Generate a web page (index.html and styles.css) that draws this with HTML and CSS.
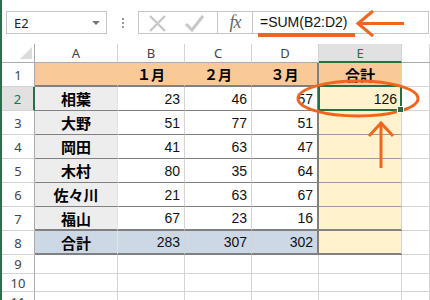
FILE: index.html
```html
<!DOCTYPE html>
<html lang="ja">
<head>
<meta charset="utf-8">
<link rel="stylesheet" href="styles.css">
</head>
<body>
<div class="win">
  <div class="bar">
    <div class="namebox"><span class="nb-text">E2</span><span class="nb-arrow"></span></div>
    <div class="dots"><i></i><i></i><i></i></div>
    <div class="btns">
      <div class="btn-xc">
        <svg width="78" height="23" viewBox="0 0 78 23">
          <path d="M11 5 L26 20 M26 5 L11 20" stroke="#c8c8c8" stroke-width="2.4" fill="none"/>
          <path d="M47 13 L53 19 L64 5" stroke="#c8c8c8" stroke-width="3" fill="none"/>
        </svg>
      </div>
      <div class="btn-fx">fx</div>
    </div>
    <div class="formula">=SUM(B2:D2)</div>
  </div>
  <div class="sheet">
    <div class="c corner"><span class="tri"></span></div>
    <div class="c ch">A</div>
    <div class="c ch">B</div>
    <div class="c ch">C</div>
    <div class="c ch">D</div>
    <div class="c ch sel">E</div>
    <div class="c ch"></div>

    <div class="c rh">1</div>
    <div class="c t1"></div>
    <div class="c t1">１月</div>
    <div class="c t1">２月</div>
    <div class="c t1 dR">３月</div>
    <div class="c t1 te">合計</div>
    <div class="c"></div>

    <div class="c rh sel">2</div>
    <div class="c nm">相葉</div>
    <div class="c n">23</div>
    <div class="c n">46</div>
    <div class="c n dR">57</div>
    <div class="c n e active">126</div>
    <div class="c"></div>

    <div class="c rh">3</div>
    <div class="c nm">大野</div>
    <div class="c n">51</div>
    <div class="c n">77</div>
    <div class="c n dR">51</div>
    <div class="c n e"></div>
    <div class="c"></div>

    <div class="c rh">4</div>
    <div class="c nm">岡田</div>
    <div class="c n">41</div>
    <div class="c n">63</div>
    <div class="c n dR">47</div>
    <div class="c n e"></div>
    <div class="c"></div>

    <div class="c rh">5</div>
    <div class="c nm">木村</div>
    <div class="c n">80</div>
    <div class="c n">35</div>
    <div class="c n dR">64</div>
    <div class="c n e"></div>
    <div class="c"></div>

    <div class="c rh">6</div>
    <div class="c nm">佐々川</div>
    <div class="c n">21</div>
    <div class="c n">63</div>
    <div class="c n dR">67</div>
    <div class="c n e"></div>
    <div class="c"></div>

    <div class="c rh">7</div>
    <div class="c nm r7">福山</div>
    <div class="c n r7">67</div>
    <div class="c n r7">23</div>
    <div class="c n dR r7">16</div>
    <div class="c n e r7"></div>
    <div class="c"></div>

    <div class="c rh">8</div>
    <div class="c nm tot">合計</div>
    <div class="c n tot">283</div>
    <div class="c n tot">307</div>
    <div class="c n dR tot">302</div>
    <div class="c n e tot"></div>
    <div class="c"></div>

    <div class="c rh">9</div>
    <div class="c"></div><div class="c"></div><div class="c"></div><div class="c"></div><div class="c"></div><div class="c"></div>

    <div class="c rh">10</div>
    <div class="c"></div><div class="c"></div><div class="c"></div><div class="c"></div><div class="c"></div><div class="c"></div>

    <div class="c rh r11">11</div>
    <div class="c"></div><div class="c"></div><div class="c"></div><div class="c"></div><div class="c"></div><div class="c"></div>
  </div>
  <svg class="marks" width="430" height="300" viewBox="0 0 430 300">
    <rect x="258" y="33" width="97" height="4" fill="#f0661f"/>
    <path d="M359 23.5 H404" stroke="#f0661f" stroke-width="3" fill="none"/>
    <path d="M373 11 L358 23.5 L373 36" stroke="#f0661f" stroke-width="3" fill="none"/>
    <ellipse cx="358" cy="98.5" rx="60" ry="17.5" stroke="#f0661f" stroke-width="3" fill="none"/>
    <path d="M381 123 V168" stroke="#f0661f" stroke-width="3" fill="none"/>
    <path d="M369 136 L381 123 L393 136" stroke="#f0661f" stroke-width="3" fill="none"/>
  </svg>
</div>
</body>
</html>
```
FILE: styles.css
```css
html, body {
  margin: 0;
  padding: 0;
  background: #ffffff;
}
.win {
  position: relative;
  width: 430px;
  height: 300px;
  overflow: hidden;
  box-sizing: border-box;
  border-left: 2px solid #2f6e48;
  font-family: "Liberation Sans", Arial, sans-serif;
}
.bar {
  height: 44px;
  box-sizing: border-box;
  padding: 11px 0 0 4px;
  display: flex;
  align-items: flex-start;
}
.namebox {
  width: 101px;
  height: 23px;
  box-sizing: border-box;
  border: 1px solid #c6c6c6;
  display: flex;
  align-items: center;
  justify-content: space-between;
  padding: 0 6px 0 7px;
}
.nb-text {
  font-family: "Noto Sans", sans-serif;
  font-size: 13px;
  color: #222;
}
.nb-arrow {
  width: 0;
  height: 0;
  border-left: 4px solid transparent;
  border-right: 4px solid transparent;
  border-top: 4px solid #777;
}
.dots {
  width: 31px;
  height: 23px;
  display: flex;
  flex-direction: column;
  align-items: center;
  justify-content: center;
  gap: 2px;
}
.dots i {
  display: block;
  width: 2px;
  height: 2px;
  background: #9a9a9a;
}
.btns {
  display: flex;
  height: 23px;
  box-sizing: border-box;
  border: 1px solid #c6c6c6;
  border-right: none;
}
.btn-xc {
  width: 78px;
  height: 21px;
  border-right: 1px solid #c6c6c6;
  overflow: hidden;
}
.btn-xc svg {
  display: block;
  margin-top: -1px;
}
.btn-fx {
  width: 34px;
  height: 21px;
  display: flex;
  align-items: center;
  justify-content: center;
  font-family: "Liberation Serif", serif;
  font-style: italic;
  font-size: 18px;
  color: #666;
  letter-spacing: -1px;
}
.formula {
  flex: 1;
  height: 23px;
  box-sizing: border-box;
  border: 1px solid #c6c6c6;
  margin-right: 1px;
  padding-left: 7px;
  font-family: "Liberation Sans", Arial, sans-serif;
  font-size: 14px;
  line-height: 21px;
  color: #111;
}
.sheet {
  display: grid;
  grid-template-columns: 33px 83px 67px 67px 67px 83px 1fr;
  grid-template-rows: 19px 24px repeat(6, 24px) 24px 19px 18px 1fr;
  height: 256px;
}
.c {
  box-sizing: border-box;
  border-right: 1px solid #d4d4d4;
  border-bottom: 1px solid #d4d4d4;
  display: flex;
  align-items: center;
  font-family: "Liberation Sans", "Noto Sans CJK JP", sans-serif;
  font-size: 14px;
  color: #111;
  min-width: 0;
}
.corner {
  position: relative;
  border-right-color: #ababab;
  border-bottom-color: #ababab;
}
.tri {
  position: absolute;
  right: 2px;
  bottom: 3px;
  width: 0;
  height: 0;
  border-left: 12px solid transparent;
  border-bottom: 12px solid #dcdcdc;
}
.ch {
  justify-content: center;
  font-family: "Noto Sans", sans-serif;
  font-size: 13px;
  color: #444;
  border-bottom-color: #ababab;
}
.ch.sel {
  background: #e1e1e1;
  color: #217346;
  border-bottom: 2px solid #217346;
}
.rh {
  justify-content: center;
  font-family: "Noto Sans", sans-serif;
  font-size: 13px;
  color: #444;
  border-right-color: #ababab;
}
.rh.sel {
  background: #e1e1e1;
  color: #217346;
  border-right: 2px solid #217346;
}
.r11 {
  align-items: flex-start;
  padding-top: 1px;
}
.t1 {
  background: #f9ca98;
  border-right-color: #f9ca98;
  border-bottom: 2px solid #808080;
  justify-content: center;
  font-family: "Noto Sans CJK JP", sans-serif;
  font-weight: 700;
  font-size: 14px;
  color: #000;
}
.t1.te {
  border-right-color: #d4d4d4;
  font-size: 15px;
}
.nm {
  background: #ededed;
  border-right-color: #e2e2e2;
  border-bottom-color: #808080;
  justify-content: center;
  font-family: "Noto Sans CJK JP", sans-serif;
  font-weight: 700;
  font-size: 15px;
  color: #000;
}
.n {
  justify-content: flex-end;
  padding-right: 4px;
  border-bottom-color: #808080;
}
.dR {
  border-right: 2px solid #808080;
}
.e {
  background: #fff2cc;
  border-bottom-color: #9c9c9c;
  border-right-color: #d4d4d4;
}
.r7 {
  border-bottom: 2px solid #808080;
}
.tot {
  background: #ccd8e6;
  border-bottom: 2px solid #808080;
}
.tot.dR {
  border-right: 2px solid #808080;
}
.e.tot {
  background: #fff2cc;
}
.active {
  position: relative;
}
.active::after {
  content: "";
  position: absolute;
  left: -1px;
  top: -2px;
  right: -1px;
  bottom: -1px;
  border: 2px solid #217346;
}
.active::before {
  content: "";
  position: absolute;
  right: -3px;
  bottom: -3px;
  width: 5px;
  height: 5px;
  background: #217346;
  border: 1px solid #fff;
  z-index: 2;
}
.marks {
  position: absolute;
  left: -2px;
  top: 0;
  pointer-events: none;
}
```
